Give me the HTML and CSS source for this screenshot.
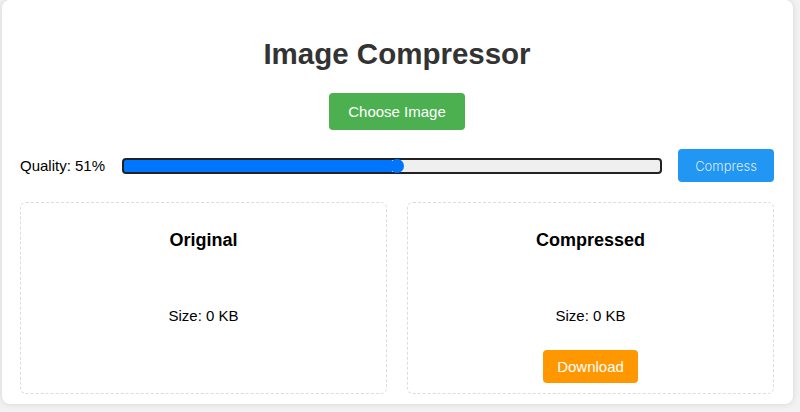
FILE: index.html
```html
<!DOCTYPE html>
<html>
<head>
<meta charset="utf-8">
<title>Image Compressor</title>
<link rel="stylesheet" href="styles.css">
</head>
<body>
<div class="card">
  <h1 class="title">Image Compressor</h1>
  <div class="choose-wrap">
    <label class="btn btn-green">Choose Image</label>
  </div>
  <div class="controls">
    <span class="quality">Quality: 51%</span>
    <input class="slider" type="range" min="0" max="100" value="51" style="background: linear-gradient(to right, #0075ff 50%, #efefef 50%);">
    <button class="btn-compress">Compress</button>
  </div>
  <div class="panels">
    <div class="panel">
      <h3 class="panel-title">Original</h3>
      <p class="size">Size: 0 KB</p>
    </div>
    <div class="panel">
      <h3 class="panel-title">Compressed</h3>
      <p class="size">Size: 0 KB</p>
      <button class="btn btn-orange">Download</button>
    </div>
  </div>
</div>
</body>
</html>
```
FILE: styles.css
```css
html, body {
  margin: 0;
  padding: 0;
}
body {
  background: #f2f2f2;
  font-family: "Liberation Sans", Arial, sans-serif;
  color: #000;
  height: 412px;
  overflow: hidden;
}
.card {
  box-sizing: border-box;
  width: 791px;
  margin-left: 2px;
  background: #fff;
  border-radius: 8px;
  box-shadow: 0 0 6px rgba(0,0,0,0.12);
  padding: 0 19px 10px 18px;
}
.title {
  margin: 0;
  padding-top: 37px;
  font-size: 29.5px;
  line-height: 34px;
  font-weight: bold;
  color: #333;
  text-align: center;
}
.choose-wrap {
  display: flex;
  justify-content: center;
  margin-top: 22px;
}
.btn {
  display: inline-block;
  border: none;
  border-radius: 4px;
  color: #fff;
  font-family: "Liberation Sans", Arial, sans-serif;
  font-size: 15px;
  line-height: 17px;
  cursor: pointer;
}
.btn-green {
  background: #4caf50;
  padding: 10px 19px;
}
.btn-orange {
  background: #ff9800;
  padding: 8px 14px;
  margin-top: 25px;
}
.controls {
  display: flex;
  align-items: center;
  margin-top: 19px;
  height: 33px;
}
.quality {
  font-size: 15px;
  line-height: 18px;
  margin-right: 17px;
  white-space: nowrap;
}
.slider {
  -webkit-appearance: none;
  appearance: none;
  flex: 1;
  margin: 0;
  box-sizing: border-box;
  height: 16px;
  border: 2px solid #222;
  border-radius: 4px;
  outline: none;
}
.slider::-webkit-slider-thumb {
  -webkit-appearance: none;
  appearance: none;
  width: 14px;
  height: 14px;
  border-radius: 50%;
  background: #0075ff;
  border: none;
}
.btn-compress {
  margin-left: 16px;
  width: 96px;
  height: 33px;
  border: none;
  border-radius: 4px;
  background: #2196f3;
  color: rgba(255,255,255,0.85);
  font-family: Inter, sans-serif;
  font-size: 13px;
  font-weight: 300;
  padding: 0;
}
.panels {
  display: grid;
  grid-template-columns: 1fr 1fr;
  gap: 20px;
  margin-top: 20px;
}
.panel {
  border: 1px dashed #dcdcdc;
  border-radius: 6px;
  text-align: center;
  padding: 26px 10px 9px;
  min-height: 155px;
}
.panel-title {
  margin: 0;
  font-size: 18px;
  line-height: 22px;
  font-weight: bold;
}
.size {
  margin: 56px 0 0;
  font-size: 15px;
  line-height: 18px;
}
```
